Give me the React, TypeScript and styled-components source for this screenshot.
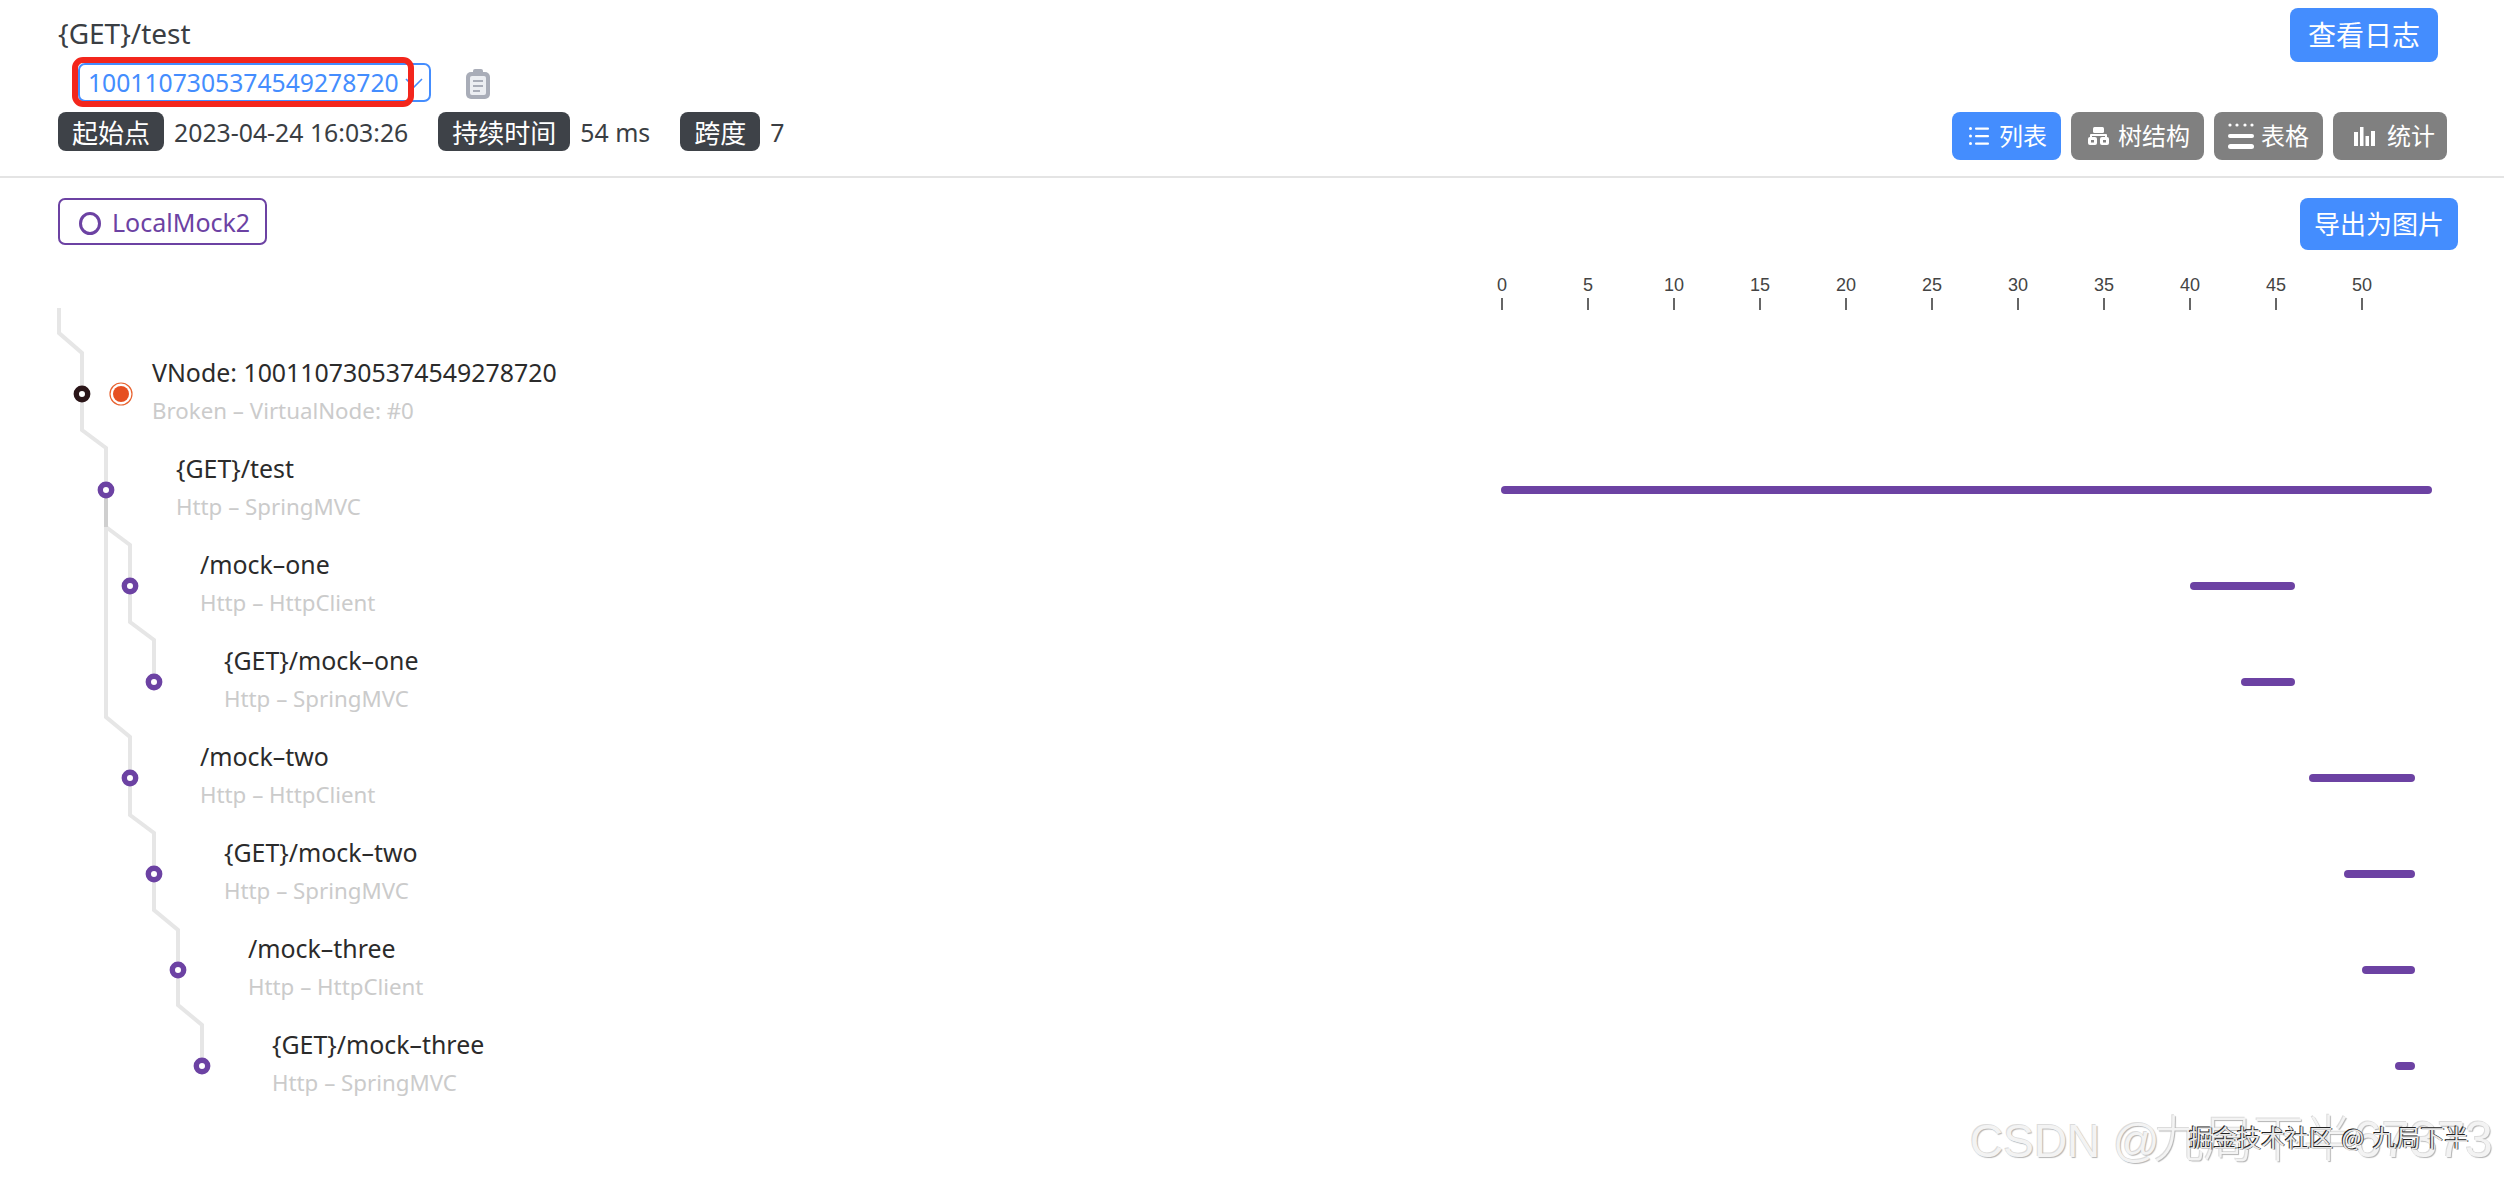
import styled, { createGlobalStyle } from "styled-components";

const BLUE = "#448dfe";
const PURPLE = "#6c42a3";
const FONT = `"Noto Sans", "Noto Sans CJK SC", sans-serif`;

// 页面基础样式
const GlobalStyle = createGlobalStyle`
  html, body {
    margin: 0;
    padding: 0;
    background: #fff;
  }
  body {
    font-family: ${FONT};
    color: #2f3236;
  }
`;

const Page = styled.div`
  position: relative;
  width: 2504px;
  height: 1182px;
  overflow: hidden;
  background: #fff;
`;

// 顶部信息区
const Header = styled.header`
  display: flex;
  flex-direction: column;
  height: 178px;
  box-sizing: border-box;
  padding: 8px 57px 0 58px;
  border-bottom: 2px solid #e4e4e4;
`;

const TitleRow = styled.div`
  display: flex;
  justify-content: space-between;
  align-items: flex-start;
  height: 54px;
`;

const TraceTitle = styled.div`
  font-size: 28px;
  line-height: 50px;
  color: #3a3e43;
`;

const BlueButton = styled.button<{ $width: number; $height: number; $size: number }>`
  width: ${(p) => p.$width}px;
  height: ${(p) => p.$height}px;
  padding: 0;
  border: none;
  border-radius: 8px;
  background: ${BLUE};
  color: #fff;
  font-family: ${FONT};
  font-size: ${(p) => p.$size}px;
  line-height: 1;
`;

const LogButton = styled(BlueButton)`
  margin-right: 9px;
`;

const SelectRow = styled.div`
  display: flex;
  align-items: center;
  margin: 1px 0 0 20px;
  height: 39px;
`;

const TraceSelect = styled.div`
  position: relative;
  display: flex;
  align-items: center;
  box-sizing: border-box;
  width: 353px;
  height: 39px;
  padding-left: 8px;
  border: 2px solid ${BLUE};
  border-radius: 7px;
  color: ${BLUE};
  font-size: 24.7px;
`;

const SelectArrow = styled.svg`
  position: absolute;
  right: 6px;
  top: 13px;
`;

// 截图上的红色标注框
const RedMark = styled.div`
  position: absolute;
  left: -8px;
  top: -8px;
  width: 342px;
  height: 50px;
  box-sizing: border-box;
  border: 6px solid #f3261c;
  border-radius: 11px;
`;

const CopyIcon = styled.svg`
  margin-left: 35px;
  margin-top: 3px;
`;

const MetaRow = styled.div`
  display: flex;
  justify-content: space-between;
  align-items: flex-start;
  margin-top: 10px;
`;

const MetaList = styled.div`
  display: flex;
  align-items: center;
  height: 39px;
`;

const MetaTag = styled.span`
  display: inline-flex;
  align-items: center;
  height: 39px;
  padding: 0 14px;
  border-radius: 8px;
  background: #3e4248;
  color: #fff;
  font-size: 26px;
`;

const MetaValue = styled.span<{ $gap: number }>`
  margin: 0 ${(p) => p.$gap}px 0 10px;
  font-size: 24.8px;
  color: #3a3e43;
`;

const ViewSwitch = styled.div`
  display: flex;
  gap: 10px;
`;

const ViewButton = styled.button<{ $active?: boolean; $left: number; $gap: number; $right?: number }>`
  display: flex;
  align-items: center;
  gap: ${(p) => p.$gap}px;
  height: 48px;
  padding: 0 ${(p) => p.$right ?? 14}px 0 ${(p) => p.$left}px;
  border: none;
  border-radius: 8px;
  background: ${(p) => (p.$active ? BLUE : "#808080")};
  color: #fff;
  font-family: ${FONT};
  font-size: 24px;
  line-height: 1;
`;

// 链路图区域
const Toolbar = styled.div`
  display: flex;
  justify-content: space-between;
  align-items: flex-start;
  height: 52px;
  margin-top: 20px;
  padding: 0 46px 0 58px;
`;

const ServiceTag = styled.div`
  display: flex;
  align-items: center;
  gap: 11px;
  box-sizing: border-box;
  width: 209px;
  height: 47px;
  padding-left: 19px;
  border: 2px solid ${PURPLE};
  border-radius: 7px;
  color: ${PURPLE};
  font-size: 25px;
`;

const ServiceDot = styled.span`
  width: 22px;
  height: 23px;
  box-sizing: border-box;
  margin-top: 3px;
  border: 3px solid ${PURPLE};
  border-radius: 50%;
`;

const Chart = styled.section`
  position: relative;
`;

const TreeLines = styled.svg`
  position: absolute;
  left: 0;
  top: 0;
`;

const TimeAxis = styled.div`
  display: flex;
  height: 96px;
  box-sizing: border-box;
  padding: 24px 0 0 1459px;
`;

const AxisTick = styled.div`
  display: flex;
  flex-direction: column;
  align-items: center;
  width: 86px;
  font-family: "Liberation Sans", sans-serif;
  font-size: 18px;
  line-height: 22px;
  color: #444;

  &::after {
    content: "";
    width: 2px;
    height: 12px;
    margin-top: 2px;
    background: #666;
  }
`;

const SpanRow = styled.div`
  display: grid;
  grid-template-columns: 1501px 1fr;
  height: 96px;
`;

const SpanLabel = styled.div<{ $depth: number }>`
  box-sizing: border-box;
  padding: 7px 0 0 ${(p) => 152 + p.$depth * 24}px;
`;

const SpanName = styled.div`
  font-size: 24.9px;
  line-height: 38px;
  color: #2b2b2b;
`;

const SpanSub = styled.div`
  font-size: 22.3px;
  line-height: 39px;
  color: #cbcbcb;
`;

const BarTrack = styled.div`
  position: relative;
`;

const SpanBar = styled.div`
  position: absolute;
  top: 44px;
  height: 8px;
  border-radius: 4px;
  background: ${PURPLE};
`;

// 水印
const WatermarkCsdn = styled.div`
  position: absolute;
  left: 1970px;
  top: 1112px;
  font-family: "Liberation Sans", "Noto Sans CJK SC", sans-serif;
  font-size: 46px;
  line-height: 56px;
  white-space: nowrap;
  color: #f3f3f3;
  text-shadow: 1px 1px 1px #b4b4b4, -1px -1px 0 #dcdcdc;
`;

const WatermarkTail = styled.span`
  margin-left: -6px;
  font-size: 50px;
  font-weight: 300;
`;

const WatermarkJuejin = styled.div`
  position: absolute;
  left: 2189px;
  top: 1120px;
  font-family: "Noto Sans CJK SC", sans-serif;
  font-size: 24px;
  line-height: 34px;
  word-spacing: 3px;
  white-space: nowrap;
  color: #e8e8e8;
  text-shadow: -1px -1px 0 #222, 1px 0 0 #555;
`;

const TICKS = [0, 5, 10, 15, 20, 25, 30, 35, 40, 45, 50];
const MS_WIDTH = 17.2;

const SPANS = [
  { name: "VNode: 1001107305374549278720", sub: "Broken – VirtualNode: #0", depth: 0 },
  { name: "{GET}/test", sub: "Http – SpringMVC", depth: 1, start: 0, end: 54.12 },
  { name: "/mock–one", sub: "Http – HttpClient", depth: 2, start: 40.05, end: 46.15 },
  { name: "{GET}/mock–one", sub: "Http – SpringMVC", depth: 3, start: 43, end: 46.15 },
  { name: "/mock–two", sub: "Http – HttpClient", depth: 2, start: 47, end: 53.15 },
  { name: "{GET}/mock–two", sub: "Http – SpringMVC", depth: 3, start: 49, end: 53.15 },
  { name: "/mock–three", sub: "Http – HttpClient", depth: 4, start: 50.05, end: 53.15 },
  { name: "{GET}/mock–three", sub: "Http – SpringMVC", depth: 5, start: 52, end: 53.15 },
];

const NODES = [
  { x: 106, y: 490 },
  { x: 130, y: 586 },
  { x: 154, y: 682 },
  { x: 130, y: 778 },
  { x: 154, y: 874 },
  { x: 178, y: 970 },
  { x: 202, y: 1066 },
];

const TreeGraph = () => (
  <TreeLines width="260" height="830" viewBox="0 250 260 830" fill="none">
    <g stroke="#e6e6e6" strokeWidth="4">
      <path d="M59 308V333L82 353V430L106 448V717L130 737V815L154 833V910L178 930V1005L202 1025V1066" />
      <path d="M106 527L130 545V622L154 640V682" />
    </g>
    <path d="M106 498V527" stroke="#cfcfcf" strokeWidth="4" />
    <circle cx="82" cy="394" r="5.7" fill="#fff" stroke="#2a1518" strokeWidth="5.4" />
    <circle cx="121" cy="394" r="11" fill="#fff" stroke="#e8622f" strokeWidth="1.2" />
    <circle cx="121" cy="394" r="8" fill="#e64f21" />
    {NODES.map((n) => (
      <circle key={n.y} cx={n.x} cy={n.y} r="5.7" fill="#fff" stroke={PURPLE} strokeWidth="5.4" />
    ))}
  </TreeLines>
);

const ListIcon = () => (
  <svg width="20" height="20" viewBox="0 0 20 20" fill="#fff">
    <circle cx="1.5" cy="2.5" r="1.5" />
    <circle cx="1.5" cy="10" r="1.5" />
    <circle cx="1.5" cy="17.5" r="1.5" />
    <rect x="6" y="1.5" width="14" height="2.2" rx="1" />
    <rect x="6" y="9" width="14" height="2.2" rx="1" />
    <rect x="6" y="16.5" width="14" height="2.2" rx="1" />
  </svg>
);

const TreeIcon = () => (
  <svg width="21" height="18" viewBox="0 0 21 18" fill="#fff">
    <rect x="5" y="0" width="11" height="6" rx="1.5" />
    <path d="M3 7h15a1 1 0 0 1 1 1v2h-2V9H4v1H2V8a1 1 0 0 1 1-1z" />
    <rect x="0" y="10" width="9" height="8" rx="2" />
    <rect x="12" y="10" width="9" height="8" rx="2" />
    <rect x="3" y="13" width="3" height="2.5" fill="#808080" />
    <rect x="15" y="13" width="3" height="2.5" fill="#808080" />
  </svg>
);

const TableIcon = () => (
  <svg width="26" height="26" viewBox="0 0 26 26" fill="#fff">
    <circle cx="2" cy="2" r="1.6" />
    <circle cx="9" cy="2" r="1.6" />
    <circle cx="17" cy="2" r="1.6" />
    <circle cx="24" cy="2" r="1.6" />
    <rect x="0" y="11" width="26" height="4" rx="2" />
    <rect x="0" y="21" width="26" height="5" rx="2.5" />
  </svg>
);

const StatIcon = () => (
  <svg width="21" height="19" viewBox="0 0 21 19" fill="#fff">
    <rect x="0" y="5" width="4" height="14" />
    <rect x="6" y="0" width="3.5" height="19" />
    <rect x="11.5" y="9" width="3.5" height="10" />
    <rect x="17" y="4" width="4" height="15" />
  </svg>
);

const ClipboardIcon = () => (
  <CopyIcon width="24" height="30" viewBox="0 0 24 30">
    <rect x="7" y="0" width="10" height="6" rx="2" fill="#a9adb8" />
    <rect x="0" y="3" width="24" height="27" rx="5" fill="#a9adb8" />
    <rect x="4" y="7" width="16" height="19" rx="2" fill="#eceef2" />
    <rect x="7" y="11" width="10" height="2" fill="#a9adb8" />
    <rect x="7" y="16" width="10" height="2" fill="#a9adb8" />
    <rect x="7" y="21" width="7" height="2" fill="#a9adb8" />
  </CopyIcon>
);

export default function App() {
  return (
    <Page>
      <GlobalStyle />
      <Header>
        <TitleRow>
          <TraceTitle>{"{GET}/test"}</TraceTitle>
          <LogButton $width={148} $height={54} $size={28}>查看日志</LogButton>
        </TitleRow>
        <SelectRow>
          <TraceSelect>
            1001107305374549278720
            <SelectArrow width="18" height="10" viewBox="0 0 18 10" fill="none">
              <path d="M1 1L9 9L17 1" stroke={BLUE} strokeWidth="1.6" />
            </SelectArrow>
            <RedMark />
          </TraceSelect>
          <ClipboardIcon />
        </SelectRow>
        <MetaRow>
          <MetaList>
            <MetaTag>起始点</MetaTag>
            <MetaValue $gap={30}>2023-04-24 16:03:26</MetaValue>
            <MetaTag>持续时间</MetaTag>
            <MetaValue $gap={30}>54 ms</MetaValue>
            <MetaTag>跨度</MetaTag>
            <MetaValue $gap={0}>7</MetaValue>
          </MetaList>
          <ViewSwitch>
            <ViewButton $active $left={17} $gap={10}><ListIcon />列表</ViewButton>
            <ViewButton $left={17} $gap={9}><TreeIcon />树结构</ViewButton>
            <ViewButton $left={14} $gap={7}><TableIcon />表格</ViewButton>
            <ViewButton $left={21} $gap={12} $right={12}><StatIcon />统计</ViewButton>
          </ViewSwitch>
        </MetaRow>
      </Header>

      <Toolbar>
        <ServiceTag><ServiceDot />LocalMock2</ServiceTag>
        <BlueButton $width={158} $height={52} $size={26}>导出为图片</BlueButton>
      </Toolbar>

      <Chart>
        <TreeGraph />
        <TimeAxis>
          {TICKS.map((t) => <AxisTick key={t}>{t}</AxisTick>)}
        </TimeAxis>
        {SPANS.map((s) => (
          <SpanRow key={s.name}>
            <SpanLabel $depth={s.depth}>
              <SpanName>{s.name}</SpanName>
              <SpanSub>{s.sub}</SpanSub>
            </SpanLabel>
            <BarTrack>
              {s.end !== undefined && (
                <SpanBar style={{ left: s.start * MS_WIDTH, width: (s.end - s.start) * MS_WIDTH }} />
              )}
            </BarTrack>
          </SpanRow>
        ))}
      </Chart>

      <WatermarkCsdn>CSDN @<WatermarkTail>九局下半67373</WatermarkTail></WatermarkCsdn>
      <WatermarkJuejin>掘金技术社区 @ 九局下半</WatermarkJuejin>
    </Page>
  );
}
